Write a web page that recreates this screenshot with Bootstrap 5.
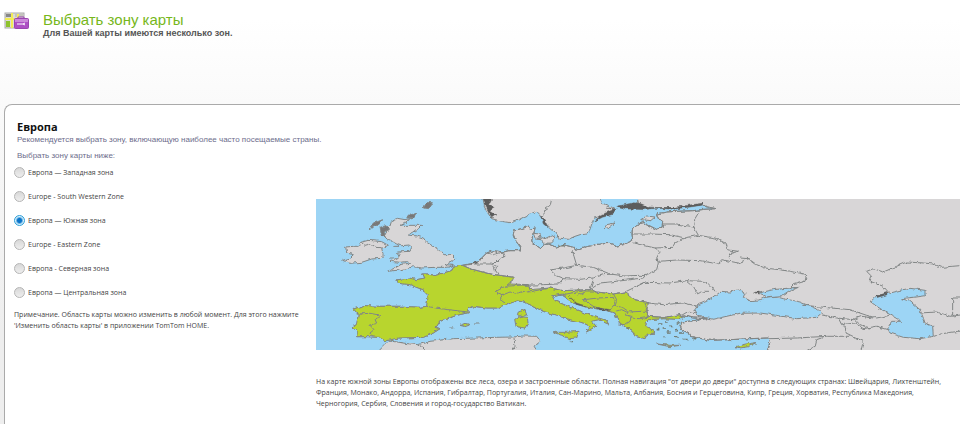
<!DOCTYPE html>
<html lang="ru">
<head>
<meta charset="utf-8">
<meta name="viewport" content="width=device-width, initial-scale=1">
<title>Выбрать зону карты</title>
<link href="https://cdn.jsdelivr.net/npm/bootstrap@5.3.0/dist/css/bootstrap.min.css" rel="stylesheet">
<style>
body{font:7px/11px "Open Sans","Noto Sans",sans-serif;color:#444;background:linear-gradient(#fff,#fff 20px,#fafafa 104px,#eee 330px) #eee;overflow-x:hidden}
.page-head{height:104px;padding:11px 4px;gap:13px}
.page-head h1{font:15px/17px "Liberation Sans",Arial,sans-serif;color:#76b71b;margin:0}
.page-head p{font:bold 9px/11px "Liberation Sans",Arial,sans-serif;color:#555}
.zone-panel{margin-left:4px;border:1px solid #aaa;border-width:1px 0 0 1px;border-radius:8px 0 0 0;padding-top:14px}
.zone-list{flex:0 0 311px;min-width:0;padding-left:9px}
.zone-list h2{font-size:11px;line-height:15px;font-weight:700;color:#111;margin:0 0 0 3px}
.hint{font:8px/12px "Liberation Sans",Arial,sans-serif;color:#6d6d8c;margin:0 0 4px 3px}
.zones{gap:12px}
.zone{height:12px;gap:3px}
.zone .form-check-input{width:11px;height:11px;border:1px solid #b5b5b5;background:linear-gradient(#d8d8d8,#eee);box-shadow:none}
.zone .form-check-input:checked{border-color:#2f9fd8;background:radial-gradient(circle,#0873c9 0 2px,#d9f2fd 4px,#8fd3f5 6px)}
.zone-tip{margin-top:11px}
.map-col{padding-top:80px;min-width:0}
.zone-map{width:100%;height:auto}
.map-note{margin-top:26px}
</style>
<script src="https://cdn.jsdelivr.net/npm/bootstrap@5.3.0/dist/js/bootstrap.bundle.min.js"></script>
</head>
<body class="d-flex flex-column min-vh-100">
<header class="page-head d-flex align-items-start">
  <svg width="26" height="20" viewBox="0 0 26 20" aria-hidden="true">
    <rect x="1" y="2" width="19" height="15" fill="#dcdcd6" stroke="#aaa"/>
    <path d="M2 3h5v3H2z" fill="#888"/><path d="M2 10h4v6H2z" fill="#8ec32c"/><path d="M11 3h8v3h-8z" fill="#c4c4bc"/>
    <path d="M1 8h12M8 2v15M14 3v4" stroke="#f2ec55" stroke-width="2"/>
    <rect x="10.500" y="7.500" width="14" height="10" rx="1" fill="#ad4fc4" stroke="#9a45b0"/>
    <path d="M11 8h13v3H11z" fill="#cb88da"/><path d="M14 7V6h6v1" fill="none" stroke="#9a45b0"/>
    <path d="M13 13h6m0 0l2-1m-2 1l2 1" stroke="#fff" fill="none"/>
  </svg>
  <div><h1>Выбрать зону карты</h1><p class="mb-0">Для Вашей карты имеются несколько зон.</p></div>
</header>
<main class="zone-panel bg-white d-flex flex-grow-1">
  <form class="zone-list text-nowrap">
    <h2>Европа</h2>
    <p class="hint">Рекомендуется выбрать зону, включающую наиболее часто посещаемые страны.</p>
    <p class="hint">Выбрать зону карты ниже:</p>
    <div class="zones d-flex flex-column">
    <div class="zone d-flex align-items-center"><input class="form-check-input m-0" type="radio" name="zone" id="z1"><label for="z1">Европа — Западная зона</label></div>
    <div class="zone d-flex align-items-center"><input class="form-check-input m-0" type="radio" name="zone" id="z2"><label for="z2">Europe - South Western Zone</label></div>
    <div class="zone d-flex align-items-center"><input class="form-check-input m-0" type="radio" name="zone" id="z3" checked><label for="z3">Европа — Южная зона</label></div>
    <div class="zone d-flex align-items-center"><input class="form-check-input m-0" type="radio" name="zone" id="z4"><label for="z4">Europe - Eastern Zone</label></div>
    <div class="zone d-flex align-items-center"><input class="form-check-input m-0" type="radio" name="zone" id="z5"><label for="z5">Европа - Северная зона</label></div>
    <div class="zone d-flex align-items-center"><input class="form-check-input m-0" type="radio" name="zone" id="z6"><label for="z6">Европа — Центральная зона</label></div>
    </div>
    <p class="zone-tip mb-0">Примечание. Область карты можно изменить в любой момент. Для этого нажмите<br>'Изменить область карты' в приложении TomTom HOME.</p>
  </form>
  <section class="map-col flex-grow-1">
    <svg class="zone-map d-block" viewBox="18 13 1932 452" role="img" aria-label="Карта Европы">
      <defs>
        <filter id="coast" x="-2%" y="-5%" width="104%" height="110%"><feTurbulence type="fractalNoise" baseFrequency=".07" numOctaves="2" seed="4"/><feDisplacementMap in="SourceGraphic" scale="12" xChannelSelector="R" yChannelSelector="G"/></filter>
        <path id="mainland" d="M980 0L985 28 1020 38 1100 40 1180 30 1188 36 1218 42 1180 44 1150 48 1100 50 1070 52 1040 58 1045 72 1058 80 1056 98 1040 104 1020 94 1000 84 980 90 968 100 966 118 968 135 958 142 940 150 920 154 900 146 870 148 830 156 805 166 790 158 760 150 740 160 720 148 700 150 690 160 675 150 662 140 665 120 672 115 675 100 662 104 658 94 635 102 612 106 610 120 618 140 632 158 630 168 600 168 580 172 550 168 530 175 515 190 505 203 480 208 458 212 430 215 425 228 400 235 375 243 352 238 338 238 345 250 320 255 300 250 258 256 262 265 300 270 325 280 345 290 355 300 350 335 330 338 280 335 200 335 165 333 130 342 145 360 140 385 126 400 142 410 140 426 175 426 205 428 225 438 240 436 265 430 340 428 370 415 390 402 378 398 390 380 440 362 475 354 472 345 490 335 530 340 560 340 590 330 620 318 640 322 660 330 700 350 740 362 780 375 820 385 840 395 830 412 845 402 858 394 845 380 865 375 895 388 890 378 850 365 810 350 780 338 735 318 725 303 760 298 765 308 790 325 830 338 880 345 915 355 920 368 930 385 950 400 965 405 975 425 1005 432 1012 418 1035 415 1015 400 1005 385 1015 375 1060 372 1110 374 1118 363 1150 370 1190 372 1150 378 1115 382 1110 392 1115 405 1135 415 1140 425 1200 437 1260 435 1320 432 1375 430 1380 440 1370 480H1970V0Z"/>
        <clipPath id="main-clip"><use href="#mainland"/></clipPath>
      </defs>
      <path fill="#9dd5f5" d="M0 0h1960v480H0z"/>
      <g filter="url(#coast)" stroke="#828686" stroke-width="3" stroke-linejoin="round" fill="#d8d6d7">
        <use href="#mainland"/>
        <path clip-path="url(#main-clip)" fill="#b8d52e" d="M425 200L458 212 480 222 540 238 612 248 600 268 655 270 660 285 720 280 760 288 840 285 860 292 910 298 945 292 975 315 1015 325 1010 350 1015 365 1060 368 1110 360 1125 365 1115 385 1090 470H100V300L250 240 350 225Z"/>
        <use href="#mainland" fill="none"/>
        <path d="M513 0L520 30 530 50 545 72 575 80 600 84 625 76 645 65 660 58 680 50 695 65 710 90 735 112 745 130 775 134 795 125 810 120 835 118 843 95 852 70 880 65 905 55 920 45 900 35 875 25 865 0Z"/>
        <path d="M195 480L220 455 235 440 250 440 285 446 325 450 360 440 430 432 500 430 560 428 610 427 640 424 680 425 692 440 672 455 690 480Z"/>
        <path d="M245 78L262 71 285 75 300 72 285 84 270 92 335 92 325 102 310 113 295 121 320 124 340 130 350 143 365 152 382 162 390 170 402 180 425 180 435 190 425 202 405 210 430 212 410 218 375 218 335 220 310 216 290 222 270 226 232 230 255 220 272 210 300 205 290 201 270 203 240 200 265 188 270 180 262 172 300 170 305 158 298 151 275 153 260 148 245 140 232 134 222 124 230 112 225 100 240 94Z"/>
        <path d="M152 143L175 137 215 141 235 152 215 161 220 182 210 191 185 193 155 203 120 206 98 197 120 190 130 180 110 175 107 157 130 155 145 155Z"/>
        <path d="M152 143L165 152 180 148 195 158 215 159" fill="none"/>
        <path d="M178 106L190 85 215 75 205 88 190 94ZM290 70L305 55 320 60 305 69ZM340 40L350 24 367 24 355 42ZM210 98l18-5 10 12-16 6 4 14-12-5Z" fill="#777"/>
        <path d="M250 155h20M240 190h12M882 102L890 90 915 85 900 98ZM685 125L705 132 725 122 738 130 725 145 700 146ZM670 116L690 118 695 132 675 130ZM992 75L1010 64 1035 67 1022 78Z"/>
        <g fill="#b8d52e">
          <path d="M625 352L645 344 650 358 638 368 622 360ZM614 374L630 366 652 368 654 385 645 400 618 396ZM730 413L770 413 807 410 800 430 780 432 755 422ZM450 392L465 386 482 390 465 396ZM418 400h12M492 385h14M1040 448L1080 452 1112 452 1080 456ZM1278 456L1310 448 1338 444 1315 456 1290 460Z"/>
        </g>
        <g fill="#9dd5f5">
          <path d="M1155 345L1165 330 1190 320 1205 310 1230 290 1260 292 1290 285 1305 295 1300 308 1320 318 1350 316 1365 308 1395 305 1420 312 1470 322 1525 345 1535 355 1520 368 1460 372 1400 362 1350 355 1290 356 1245 366 1210 374 1165 365Z"/>
          <path d="M1348 295L1390 285 1440 280 1465 278 1440 290 1420 303 1370 306Z"/>
          <path d="M1685 318L1700 303 1730 297 1770 287 1800 281 1845 287 1845 303 1810 308 1775 312 1800 320 1830 345 1840 370 1845 385 1868 395 1870 425 1830 432 1780 428 1740 415 1733 400 1745 380 1775 380 1740 360 1700 335 1680 320Z"/>
        </g>
        <g fill="none">
          <path d="M725 13L720 35 705 45 700 65M458 212L480 222 540 238 612 248 600 268 585 275M458 212L490 208 520 208 545 208 555 225 565 240M530 175L550 180 580 172 585 185 565 195 550 210 560 215 555 230M585 275L555 292 580 300 600 292 620 296 640 290 655 292M585 275L655 270 660 285 655 292 720 280 760 288 840 285M555 292L580 300 570 315 585 325M350 335L390 342 440 348 472 352M140 358L180 356 212 362 195 375 200 385 180 392 192 405 180 415 185 426M612 430L615 455 605 470M325 450L345 465"/>
          <path d="M785 166L792 185 800 212 850 218 900 238 945 244 990 242 1005 243M800 212L760 220 720 226 740 244 760 252 810 254 850 250 880 240 910 238M760 252L745 268 700 270 640 272M850 250L840 285 870 265 920 260 1000 250 1005 243M840 285L860 292 910 298 945 292 1005 263 1015 260M760 300L800 292 840 285M800 305L825 292 860 292M820 315L865 310 910 308 915 330 900 348M820 315L850 335 900 348M910 298L920 315 915 332 940 340 955 350 945 360 965 365 960 380 945 390 925 388M920 350L935 345 950 352 1000 350 1012 350 1005 325 1015 325M1010 350L1015 368 990 372 960 370"/>
          <path d="M975 315L1015 325 1060 330 1120 325 1165 335M1005 263L1080 265 1130 258 1150 275 1165 300 1180 290 1200 290M1130 258L1180 260 1205 275 1215 290M1005 243L1040 225 1045 205 1040 190 1050 170 1035 160 970 145M1045 200L1100 196 1170 198 1225 208 1235 195 1285 205 1320 190"/>
          <path d="M966 118L1020 118 1080 120 1125 130 1165 122 1150 95 1155 72 1165 55M1058 88L1100 88 1155 98M1125 130L1095 145 1090 158 1035 160M1165 122L1215 130 1245 145 1250 165 1285 170 1255 178 1260 190M1290 190L1315 192 1340 210 1365 220 1430 228 1465 235 1490 240 1485 260 1450 270 1440 280M1010 365L1065 368 1110 360 1118 372M1110 365L1135 350 1160 355"/>
          <path d="M1480 332L1540 338 1620 345 1670 362 1700 370 1740 362M1535 360L1580 370 1630 375 1655 365 1690 370M1585 370L1595 390 1635 385 1660 402 1700 395 1735 405M1630 370L1650 390 1680 400M1595 385L1610 400 1608 415 1660 440 1650 480M1380 432L1460 430 1550 425 1620 425M1540 428L1520 435 1515 455 1480 475M1735 292L1720 275 1680 260 1685 245 1670 230 1690 222 1720 232 1760 215 1790 202 1840 205 1870 208 1895 218 1960 212M1830 355L1880 352 1920 365 1960 360M1870 422L1910 415 1960 408M1928 365V310H1970"/>
        </g>
        <g fill="#5c5c5c" stroke="#666">
          <path d="M516 12L545 12 536 30 553 40 540 48 558 60 545 70ZM920 35L970 24 990 26 1030 42 1000 45 950 43ZM1020 40L1090 38 1180 25 1178 32 1090 44ZM850 82L875 60 908 45 885 36 922 45 905 60 878 68ZM690 62L700 70 715 100 700 88ZM775 302L800 325 840 338 800 330ZM850 336L905 346 870 346ZM1330 292h18v7ZM1695 305l40-12-5 8-30 8ZM503 200l-20 8 22-2Z" stroke-width="1"/>
        </g>
        <path d="M1045 388h12M1065 382h8M1058 400h10M1080 395h10M1100 385h8M1070 412h12M1095 408h12M1095 425h8M1118 435h15M1150 432h10M1040 405h8M950 400h10M1060 425h8M1110 415h12M782 440h7M745 153h18" stroke="#737b73" stroke-width="5"/>
      </g>
    </svg>
    <p class="map-note mb-0 text-nowrap">На карте южной зоны Европы отображены все леса, озера и застроенные области. Полная навигация "от двери до двери" доступна в следующих странах: Швейцария, Лихтенштейн,<br>Франция, Монако, Андорра, Испания, Гибралтар, Португалия, Италия, Сан-Марино, Мальта, Албания, Босния и Герцеговина, Кипр, Греция, Хорватия, Республика Македония,<br>Черногория, Сербия, Словения и город-государство Ватикан.</p>
  </section>
</main>
</body>
</html>
